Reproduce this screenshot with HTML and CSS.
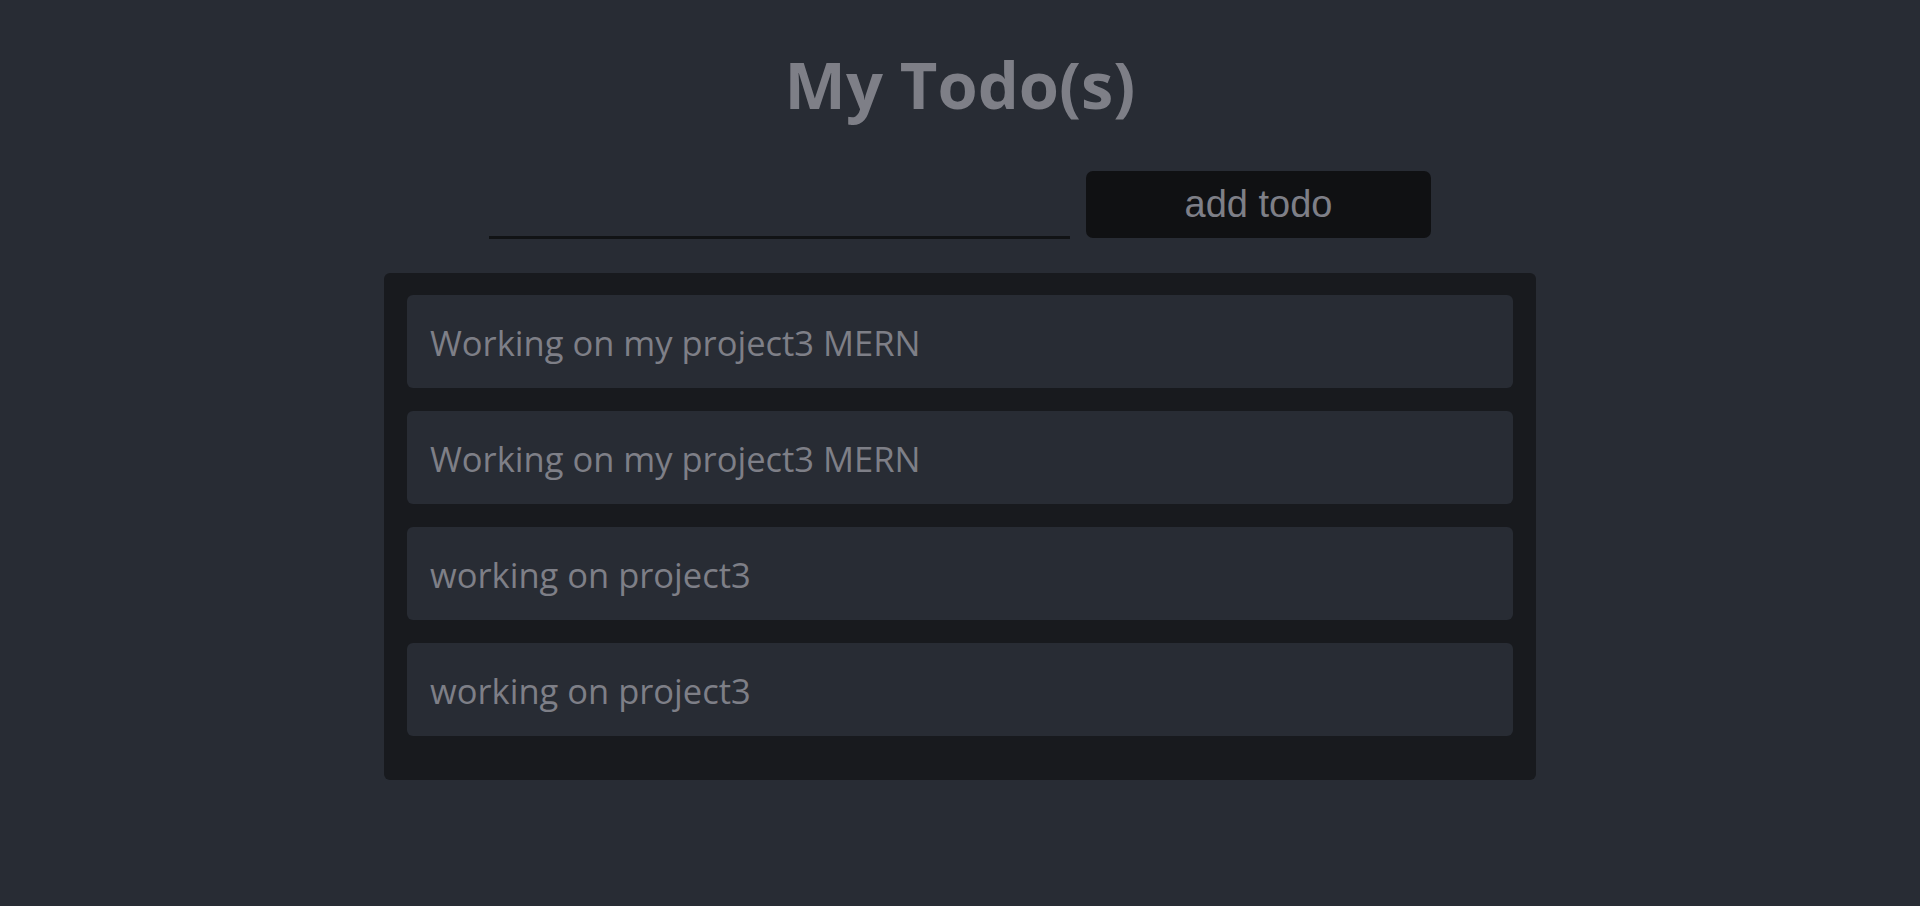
FILE: index.html
```html
<!DOCTYPE html>
<html lang="en">
<head>
<meta charset="utf-8">
<title>My Todo(s)</title>
<link rel="stylesheet" href="styles.css">
</head>
<body>
<div class="app">
  <h1 class="title">My Todo(s)</h1>
  <form class="add-form">
    <input class="add-input" type="text">
    <button class="add-btn" type="button">add todo</button>
  </form>
  <ul class="todo-list">
    <li class="todo-item">Working on my project3 MERN</li>
    <li class="todo-item">Working on my project3 MERN</li>
    <li class="todo-item">working on project3</li>
    <li class="todo-item">working on project3</li>
  </ul>
</div>
</body>
</html>
```

FILE: styles.css
```css
html, body {
  margin: 0;
  padding: 0;
  background: #282c34;
  height: 100%;
}
body {
  font-family: "Open Sans", "Noto Sans", sans-serif;
  color: #7e7f87;
}
.app {
  display: flex;
  flex-direction: column;
  align-items: center;
}
.title {
  margin: 40px 0 0 0;
  font-size: 65px;
  line-height: 88px;
  font-weight: 700;
  color: #7e7f87;
}
.add-form {
  display: flex;
  align-items: flex-end;
  gap: 16px;
  margin-top: 43px;
}
.add-input {
  width: 581px;
  height: 40px;
  box-sizing: border-box;
  border: none;
  border-bottom: 3px solid #111315;
  background: transparent;
  outline: none;
  margin-bottom: -1px;
}
.add-btn {
  width: 345px;
  height: 67px;
  border: none;
  border-radius: 7px;
  background: #101113;
  color: #7e7f87;
  font-family: "Liberation Sans", Arial, sans-serif;
  font-size: 38px;
  padding: 0;
}
.todo-list {
  list-style: none;
  margin: 35px 0 0 0;
  width: 1152px;
  box-sizing: border-box;
  padding: 22px 23px 21px 23px;
  background: #181a1e;
  border-radius: 6px;
}
.todo-item {
  background: #282c34;
  border-radius: 6px;
  height: 93px;
  box-sizing: border-box;
  padding: 2px 23px 0 23px;
  display: flex;
  align-items: center;
  font-size: 34.5px;
  color: #7e7f87;
  margin-bottom: 23px;
}
```
